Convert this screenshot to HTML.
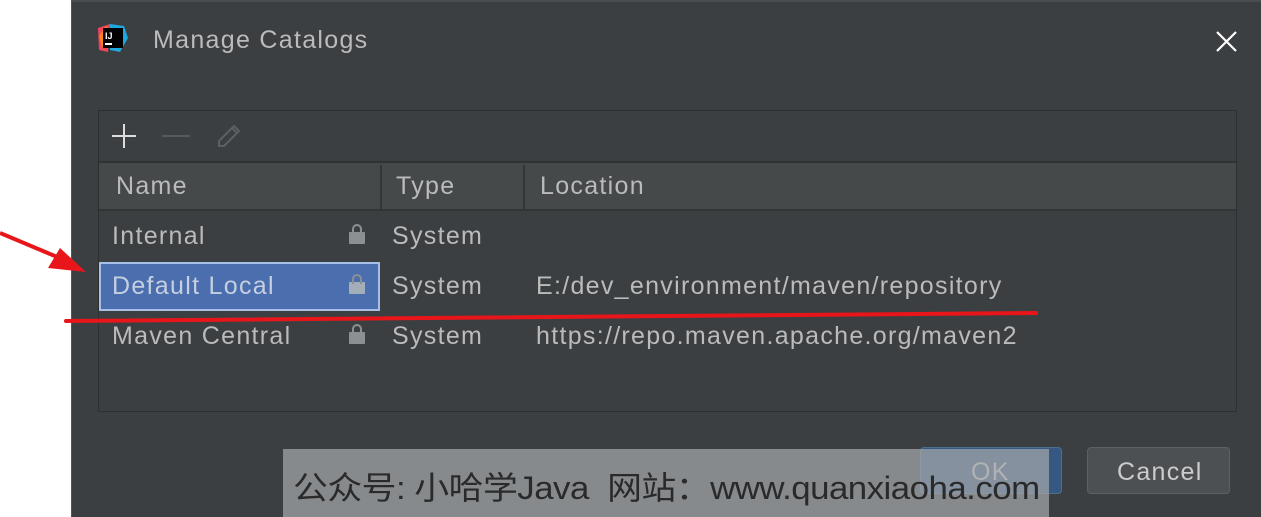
<!DOCTYPE html>
<html><head><meta charset="utf-8"><style>
*{margin:0;padding:0;box-sizing:border-box}
body{width:1261px;height:517px;background:#fff;position:relative;overflow:hidden;font-family:"Liberation Sans","Noto Sans CJK SC",sans-serif}
.dlg{position:absolute;left:71px;top:0;width:1190px;height:517px;background:#3c3f41;border-left:1px solid #555;border-top:2px solid #4a4d50}
.abs{position:absolute}
.t{color:#bbbbbb;font-size:25px;position:absolute;white-space:nowrap;letter-spacing:1.3px}
.panel{position:absolute;left:98px;top:110px;width:1139px;height:302px;border:1px solid #2d2f30;background:#3c3f41}
.hdr{position:absolute;left:0;top:50px;width:100%;height:50px;background:#45494a;border-top:2px solid #303233;border-bottom:2px solid #323435}
.lock{position:absolute;width:16px;height:12px;background:#8c9093;border-radius:1px}
.lock:before{content:"";position:absolute;left:3px;top:-8px;width:6px;height:8px;border:2px solid #8c9093;border-bottom:none;border-radius:5px 5px 0 0}
</style></head><body>
<div class="dlg"></div>
<svg class="abs" style="left:96px;top:22px" width="34" height="34" viewBox="0 0 34 34">
<polygon points="2,6 14,2 12,30 3,28" fill="#f0465a"/>
<polygon points="14,2 28,4 32,16 24,30 14,28" fill="#1fa7e0"/>
<polygon points="3,14 10,4 16,10 6,26" fill="#fc801d"/>
<rect x="7" y="6" width="20" height="20" fill="#000"/>
<text x="9" y="17" font-size="9" font-weight="bold" fill="#fff" font-family="Liberation Sans">IJ</text>
<rect x="9" y="21" width="7" height="2" fill="#fff"/>
</svg>
<div class="t" style="left:153px;top:26px">Manage Catalogs</div>
<svg class="abs" style="left:1215px;top:30px" width="23" height="23"><path d="M2 2L21 21M21 2L2 21" stroke="#fff" stroke-width="2.2"/></svg>
<div class="panel">
 <svg class="abs" style="left:11px;top:11px" width="28" height="28"><path d="M14 2V26M2 14H26" stroke="#dcdcdc" stroke-width="2"/></svg>
 <div class="abs" style="left:63px;top:24px;width:28px;height:2px;background:#555a5c"></div>
 <svg class="abs" style="left:116px;top:11px" width="28" height="28"><path d="M4 24L4 19L19 4L24 9L9 24Z M17 6L22 11" stroke="#5b6063" stroke-width="2" fill="none"/></svg>
 <div class="hdr">
  <div class="abs" style="left:281px;top:2px;width:2px;height:44px;background:#333536"></div>
  <div class="abs" style="left:424px;top:2px;width:2px;height:44px;background:#333536"></div>
 </div>
 <div class="t" style="left:17px;top:61px">Name</div>
 <div class="t" style="left:297px;top:61px">Type</div>
 <div class="t" style="left:441px;top:61px">Location</div>
 <div class="t" style="left:13px;top:111px">Internal</div>
 <div class="lock" style="left:250px;top:121px"></div>
 <div class="t" style="left:293px;top:111px">System</div>
 <div class="abs" style="left:0;top:151px;width:281px;height:49px;background:#4b6eaf;border:2px solid #a8c0e8"></div>
 <div class="t" style="left:13px;top:161px;color:#c5cfe0">Default Local</div>
 <div class="lock" style="left:250px;top:171px;background:#a4aeb8"></div>
 <div class="t" style="left:293px;top:161px">System</div>
 <div class="t" style="left:437px;top:161px">E:/dev_environment/maven/repository</div>
 <div class="t" style="left:13px;top:211px">Maven Central</div>
 <div class="lock" style="left:250px;top:221px"></div>
 <div class="t" style="left:293px;top:211px">System</div>
 <div class="t" style="left:437px;top:211px">https://repo.maven.apache.org/maven2</div>
</div>
<div class="abs" style="left:920px;top:447px;width:142px;height:47px;background:#365880;border:1px solid #4c708c;border-radius:4px"></div>
<div class="t" style="left:971px;top:458px;color:#ccc">OK</div>
<div class="abs" style="left:1087px;top:447px;width:143px;height:47px;background:#4c5052;border:1px solid #5e6060;border-radius:4px"></div>
<div class="t" style="left:1117px;top:458px;color:#ccc">Cancel</div>
<div class="abs" style="left:283px;top:449px;width:766px;height:68px;background:rgba(165,168,170,0.72)"></div>
<div class="t" style="left:293px;top:463px;color:#2a2a2a;font-size:32px;letter-spacing:-0.5px;transform:scaleX(1.09);transform-origin:left top">公众号: 小哈学Java&nbsp; 网站：www.quanxiaoha.com</div>
<svg class="abs" style="left:0;top:0" width="1261" height="517">
<path d="M0 233L62 259" stroke="#e8161a" stroke-width="4"/>
<polygon points="86,272 48,268 60,248" fill="#e8161a"/>
<path d="M66 321Q500 316 1036 313" stroke="#e8161a" stroke-width="4" fill="none" stroke-linecap="round"/>
</svg>
</body></html>
